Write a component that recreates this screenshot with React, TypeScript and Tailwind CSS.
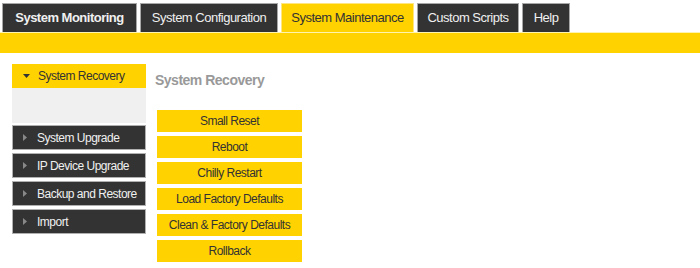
import React from "react";

const tabs = [
  { label: "System Monitoring", w: "w-[135px]", bold: true, active: false },
  { label: "System Configuration", w: "w-[138px]", bold: false, active: false },
  { label: "System Maintenance", w: "w-[133px]", bold: false, active: true },
  { label: "Custom Scripts", w: "w-[102px]", bold: false, active: false },
  { label: "Help", w: "w-[48px]", bold: false, active: false },
];

const side = ["System Upgrade", "IP Device Upgrade", "Backup and Restore", "Import"];
const buttons = [
  "Small Reset",
  "Reboot",
  "Chilly Restart",
  "Load Factory Defaults",
  "Clean & Factory Defaults",
  "Rollback",
];

export default function App() {
  return (
    <div className="w-[700px] h-[268px] bg-white font-['Liberation_Sans',Arial,sans-serif] tracking-[-0.5px] overflow-hidden">
      <div className="flex gap-[3px] pl-[2px] pt-[3px] h-[32px] items-stretch">
        {tabs.map((t) => (
          <div
            key={t.label}
            className={`${t.w} flex items-center justify-center text-[13px] whitespace-nowrap border border-b-0 ${
              t.active
                ? "bg-[#ffd200] text-[#333] border-[#ffe680]"
                : "bg-[#333333] text-[#f0f0f0] border-[#a8a8a8]"
            } ${t.bold ? "font-bold" : ""}`}
          >
            {t.label}
          </div>
        ))}
      </div>
      <div className="h-[21px] bg-[#ffd200] border-t border-[#fff3b0]" />
      <div className="flex pt-[11px]">
        <div className="ml-[12px] w-[134px] flex flex-col">
          <div className="h-[24px] bg-[#ffd200] flex items-center text-[12px] text-[#333] whitespace-nowrap">
            <svg width="7" height="4" viewBox="0 0 7 4" className="ml-[11px] mr-[8px]">
              <polygon points="0,0 7,0 3.5,4" fill="#333" />
            </svg>
            System Recovery
          </div>
          <div className="h-[35px] bg-[#f0f0f0]" />
          <div className="flex flex-col gap-[3px] mt-[2px]">
            {side.map((s) => (
              <div
                key={s}
                className="h-[25px] bg-[#333333] border border-[#b0b0b0] flex items-center text-[12px] text-[#f0f0f0] whitespace-nowrap"
              >
                <svg width="4" height="7" viewBox="0 0 4 7" className="ml-[10px] mr-[10px]">
                  <polygon points="0,0 4,3.5 0,7" fill="#888" />
                </svg>
                {s}
              </div>
            ))}
          </div>
        </div>
        <div className="ml-[9px] flex flex-col">
          <div className="h-[32px] flex items-center text-[14px] font-bold text-[#999]">
            System Recovery
          </div>
          <div className="flex flex-col gap-[4px] mt-[14px] ml-[2px]">
            {buttons.map((b) => (
              <div
                key={b}
                className="w-[145px] h-[22px] bg-[#ffd200] flex items-center justify-center text-[12px] text-[#333] whitespace-nowrap"
              >
                {b}
              </div>
            ))}
          </div>
        </div>
      </div>
    </div>
  );
}
